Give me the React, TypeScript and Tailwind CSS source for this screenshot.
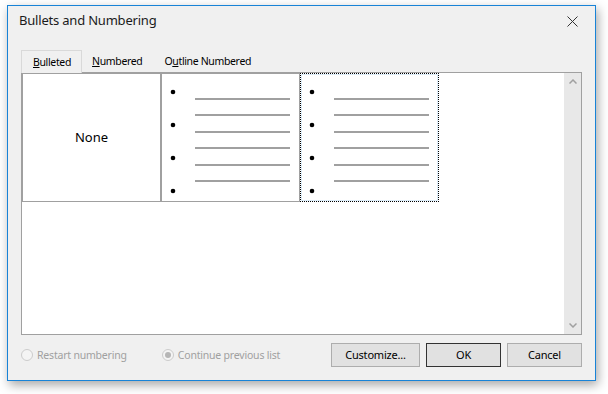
import React from "react";

const font = { fontFamily: '"Noto Sans", "Open Sans", sans-serif' };

function BulletPreview() {
  const bullets = [19, 52, 85, 118];
  const lines = [25, 41, 58, 74, 91, 107];
  return (
    <svg width="137" height="127" viewBox="0 0 137 127" className="block">
      {bullets.map((y) => (
        <circle key={y} cx="11" cy={y - 1} r="2.3" fill="#000" />
      ))}
      {lines.map((y) => (
        <rect key={y} x="33" y={y - 1} width="95" height="2" fill="#a0a0a0" />
      ))}
    </svg>
  );
}

function Radio({ label, checked }: { label: string; checked?: boolean }) {
  return (
    <div className="flex items-center gap-[4px]">
      <span className="w-[12px] h-[12px] rounded-full border border-[#cccccc] bg-[#f4f4f4] flex items-center justify-center">
        {checked && <span className="w-[6px] h-[6px] rounded-full bg-[#b6b6b6]" />}
      </span>
      <span className="text-[10.5px] tracking-[-0.2px] text-[#a0a0a0] leading-none">{label}</span>
    </div>
  );
}

export default function App() {
  return (
    <div className="w-[608px] h-[394px] bg-white pt-[5px] pl-[7px] overflow-hidden text-black" style={font}>
      <div className="w-[589px] h-[376px] border border-[#1883d7] bg-[#f0f0f0] flex flex-col shadow-[2px_4px_10px_rgba(0,0,0,0.35)]">
        {/* Title bar */}
        <div className="h-[30px] flex items-center justify-between pl-[11px] pr-[17px]">
          <span className="text-[13px] tracking-[-0.2px] text-[#1b1b1b]">Bullets and Numbering</span>
          <svg width="11" height="11" viewBox="0 0 11 11">
            <path d="M0.5 0.5 L10.5 10.5 M10.5 0.5 L0.5 10.5" stroke="#333" strokeWidth="1" />
          </svg>
        </div>

        <div className="flex-1 flex flex-col px-[13px] pt-[14px] pb-[12px]">
          {/* Tabs */}
          <div className="flex h-[22px] items-end text-[10.5px] tracking-[-0.35px] relative z-10">
            <div className="h-[23px] -mb-[1px] pt-[2px] pl-[11px] pr-[10px] flex items-center border border-b-0 border-[#d9d9d9] bg-[#f0f0f0]">
              <span><span className="underline">B</span>ulleted</span>
            </div>
            <div className="h-[22px] pt-[2px] pl-[10px] pr-[11px] flex items-center">
              <span><span className="underline">N</span>umbered</span>
            </div>
            <div className="h-[22px] pt-[2px] px-[11px] flex items-center">
              <span>O<span className="underline">u</span>tline Numbered</span>
            </div>
          </div>

          {/* List box */}
          <div className="h-[263px] border border-[#a0a0a0] bg-white flex">
            <div className="flex-1 flex items-start">
              <div className="w-[139px] h-[129px] border border-[#a0a0a0] flex items-center justify-center">
                <span className="text-[13px]">None</span>
              </div>
              <div className="w-[139px] h-[129px] border border-[#a0a0a0]">
                <BulletPreview />
              </div>
              <div className="w-[139px] h-[129px] border border-dotted border-black">
                <div className="w-full h-full border border-[#dcecf8]">
                  <div className="-m-[1px]">
                    <BulletPreview />
                  </div>
                </div>
              </div>
            </div>
            <div className="w-[17px] bg-[#e8e8e8] flex flex-col items-center justify-between py-[6px]">
              <svg width="8" height="5" viewBox="0 0 8 5">
                <path d="M0.5 4.5 L4 1 L7.5 4.5" fill="none" stroke="#a0a0a0" strokeWidth="1.5" />
              </svg>
              <svg width="8" height="5" viewBox="0 0 8 5">
                <path d="M0.5 0.5 L4 4 L7.5 0.5" fill="none" stroke="#a0a0a0" strokeWidth="1.5" />
              </svg>
            </div>
          </div>

          {/* Bottom row */}
          <div className="mt-[8px] h-[24px] flex items-center">
            <Radio label="Restart numbering" />
            <div className="ml-[35px]">
              <Radio label="Continue previous list" checked />
            </div>
            <div className="ml-auto flex gap-[6px] text-[11px] tracking-[-0.2px]">
              <button className="w-[89px] h-[24px] border border-[#adadad] bg-[#e1e1e1]">Customize...</button>
              <button className="w-[75px] h-[24px] border border-[#333333] bg-[#e1e1e1]">OK</button>
              <button className="w-[75px] h-[24px] border border-[#adadad] bg-[#e1e1e1]">Cancel</button>
            </div>
          </div>
        </div>
      </div>
    </div>
  );
}
